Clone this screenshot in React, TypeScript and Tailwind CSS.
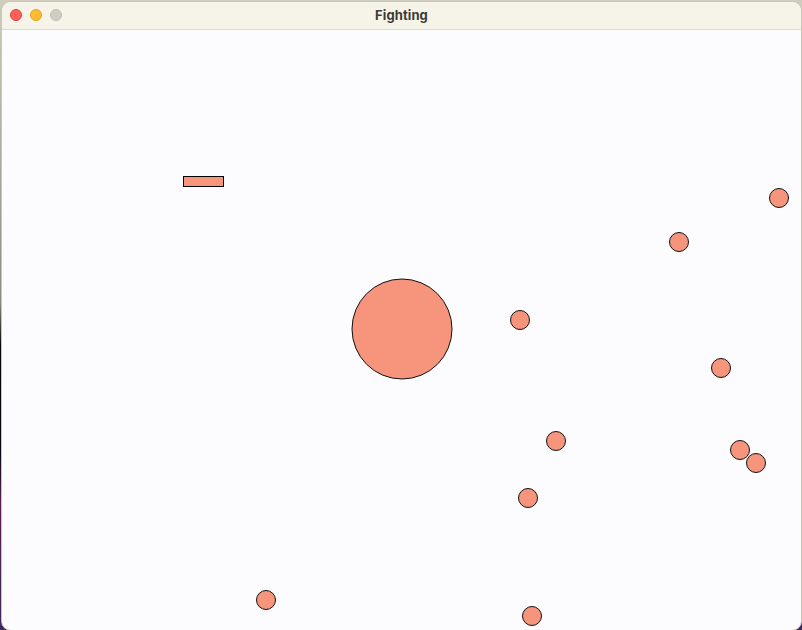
import React from 'react';

const balls = [
  { x: 779, y: 199 },
  { x: 679, y: 243 },
  { x: 520, y: 321 },
  { x: 721, y: 369 },
  { x: 556, y: 442 },
  { x: 740, y: 451 },
  { x: 756, y: 464 },
  { x: 528, y: 499 },
  { x: 266, y: 601 },
  { x: 532, y: 617 },
];

const FILL = '#f7957c';

const App: React.FC = () => {
  return (
    <div className="w-[802px] h-[630px] overflow-hidden bg-[linear-gradient(180deg,#cfcdbf_0%,#8a8a80_48%,#050505_55%,#0a0a12_72%,#5a2050_80%,#3a2a5a_100%)] pt-px pl-px">
      <div className="w-[801px] h-[630px] rounded-[10px] overflow-hidden bg-[#fcfcfe] border border-[#c9c7bb] flex flex-col" style={{ fontFamily: 'Inter, "Noto Sans", "DejaVu Sans", sans-serif' }}>
        <div className="h-[28px] shrink-0 bg-[#f6f4e9] border-b border-[#dcdad0] relative flex items-center justify-center">
          <div className="absolute left-[8px] top-[7px] flex gap-[8px]">
            <span className="w-[12px] h-[12px] rounded-full bg-[#fe5f57] border border-[#e0443e]" />
            <span className="w-[12px] h-[12px] rounded-full bg-[#febc2e] border border-[#dea123]" />
            <span className="w-[12px] h-[12px] rounded-full bg-[#cfcdc6] border border-[#bdbbb4]" />
          </div>
          <span className="text-[13px] font-bold text-[#3c3a36] tracking-[0.1px]">Fighting</span>
        </div>
        <div className="flex-1 relative">
          <svg width="800" height="600" className="block" viewBox="2 31 800 600">
            <rect x="183.5" y="177.5" width="40" height="10" fill={FILL} stroke="#000" strokeWidth="1" />
            <circle cx="402" cy="330" r="50" fill={FILL} stroke="#111" strokeWidth="1" />
            {balls.map((b, i) => (
              <circle key={i} cx={b.x} cy={b.y} r="9.5" fill={FILL} stroke="#111" strokeWidth="1" />
            ))}
          </svg>
        </div>
      </div>
    </div>
  );
};

export default App;
